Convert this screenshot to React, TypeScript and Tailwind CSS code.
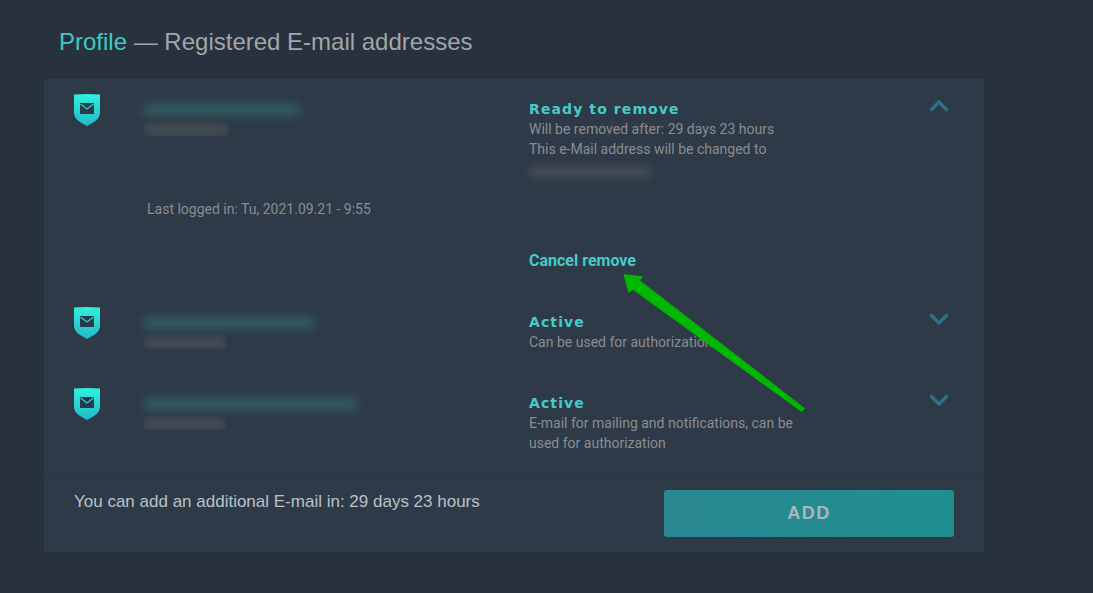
import React from 'react';

function MailShield() {
  return (
    <svg width="26" height="32" viewBox="0 0 26 32" className="shrink-0">
      <defs>
        <linearGradient id="shieldFill" x1="0" y1="0" x2="0" y2="1">
          <stop offset="0" stopColor="#30f0dc" />
          <stop offset="1" stopColor="#23b9c6" />
        </linearGradient>
      </defs>
      <path d="M0 0.5 Q13 -0.3 26 0.5 V19 Q26 24 20 28 L13 32 L6 28 Q0 24 0 19 Z" fill="url(#shieldFill)" />
      <rect x="6" y="9" width="14" height="11" fill="#2b3a49" />
      <path d="M6.5 10 L13 15 L19.5 10" fill="none" stroke="#2bd0d0" strokeWidth="1.3" />
    </svg>
  );
}

function Chevron({ up }: { up?: boolean }) {
  return (
    <svg width="20" height="12" viewBox="0 0 20 12" className="shrink-0">
      <path d={up ? 'M1.5 10.5 L10 2 L18.5 10.5' : 'M1.5 1.5 L10 10 L18.5 1.5'} fill="none" stroke="#2f7189" strokeWidth="3.4" />
    </svg>
  );
}

function BlurredEmail({ width, sub }: { width: number; sub: number }) {
  return (
    <div className="w-[385px] shrink-0 pt-[10px]">
      <div className="h-[12px] bg-[#315c62] blur-[5px]" style={{ width }} />
      <div className="h-[15px] mt-[5px] overflow-hidden" style={{ width: sub }}>
        <div className="h-[10px] mt-[4px] bg-[#485056] blur-[4px]" />
      </div>
    </div>
  );
}

function StatusTitle({ children }: { children: React.ReactNode }) {
  return (
    <div className="h-5 leading-[21px] text-[14px] font-bold tracking-[1.1px] text-[#45cbc8] font-['DejaVu_Sans',sans-serif]">
      {children}
    </div>
  );
}

export default function App() {
  return (
    <div className="relative w-[1093px] h-[593px] overflow-hidden bg-[#27323e] font-['Roboto',sans-serif]">
      <h1 className="pl-[59px] pt-[27px] h-[79px] text-[24px] leading-[30px] font-['Liberation_Sans',sans-serif] text-[#a3a5a8]">
        <span className="text-[#3fc9c6]">Profile</span> — Registered E-mail addresses
      </h1>

      <div className="ml-[44px] w-[940px] h-[473px] bg-[#2e3a48] flex flex-col">
        {/* expanded row */}
        <div className="h-[213px] shrink-0 pl-[30px] pt-[15px] flex flex-col">
          <div className="flex h-[100px]">
            <div className="w-[70px] shrink-0">
              <MailShield />
            </div>
            <BlurredEmail width={155} sub={85} />
            <div className="w-[400px] shrink-0 pt-[5px] text-[14px] leading-5 text-[#8a8d90]">
              <StatusTitle>Ready to remove</StatusTitle>
              <div>Will be removed after: 29 days 23 hours</div>
              <div>This e-Mail address will be changed to</div>
              <div className="h-[10px] w-[122px] mt-[8px] bg-[#485056] blur-[4px]" />
            </div>
            <div className="pt-[6px]">
              <Chevron up />
            </div>
          </div>
          <div className="pl-[73px] mt-[5px] h-5 text-[14px] leading-5 text-[#8a8d90]">Last logged in: Tu, 2021.09.21 - 9:55</div>
          <div className="pl-[455px] mt-[32px] h-5 text-[16px] leading-5 font-bold text-[#45cbc8]">Cancel remove</div>
        </div>

        {/* active rows */}
        <div className="h-[81px] shrink-0 pl-[30px] pt-[15px] flex">
          <div className="w-[70px] shrink-0">
            <MailShield />
          </div>
          <BlurredEmail width={170} sub={82} />
          <div className="w-[400px] shrink-0 pt-[5px] text-[14px] leading-5 text-[#8a8d90]">
            <StatusTitle>Active</StatusTitle>
            <div>Can be used for authorization</div>
          </div>
          <div className="pt-[6px]">
            <Chevron />
          </div>
        </div>

        <div className="h-[101px] shrink-0 pl-[30px] pt-[15px] flex">
          <div className="w-[70px] shrink-0">
            <MailShield />
          </div>
          <BlurredEmail width={214} sub={82} />
          <div className="w-[400px] shrink-0 pt-[5px] text-[14px] leading-5 text-[#8a8d90]">
            <StatusTitle>Active</StatusTitle>
            <div className="w-[270px]">E-mail for mailing and notifications, can be used for authorization</div>
          </div>
          <div className="pt-[6px]">
            <Chevron />
          </div>
        </div>

        {/* footer */}
        <div className="flex-1 border-t border-[#283441] pl-[30px] pr-[30px] flex justify-between">
          <div className="pt-[17px] text-[17px] leading-5 text-[#b9c2c8] font-['Liberation_Sans',sans-serif]">
            You can add an additional E-mail in: 29 days 23 hours
          </div>
          <button className="mt-[15px] w-[290px] h-[47px] rounded-[3px] bg-gradient-to-r from-[#2a8793] to-[#1f8f8e] text-[18px] font-bold tracking-[1.5px] text-[#a9b6ba] font-['Liberation_Sans',sans-serif]">
            ADD
          </button>
        </div>
      </div>

      {/* annotation arrow */}
      <svg className="absolute left-0 top-0 pointer-events-none" width="1093" height="593" viewBox="0 0 1093 593">
        <path d="M804 408.5 L801.5 411 L633 289 L629 292 L624.5 275 L642 277 L639 280.5 Z" fill="#00b800" stroke="#00b800" strokeWidth="1.5" strokeLinejoin="round" />
      </svg>
    </div>
  );
}
